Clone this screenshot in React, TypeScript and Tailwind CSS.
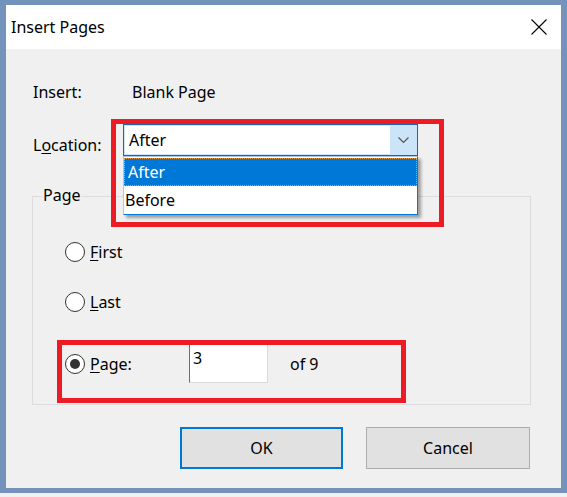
import React from 'react';

function Radio({ checked = false }: { checked?: boolean }) {
  return (
    <span className="flex h-[20px] w-[20px] shrink-0 items-center justify-center rounded-full border border-[#333333] bg-white">
      {checked && <span className="h-[10px] w-[10px] rounded-full bg-[#333333]" />}
    </span>
  );
}

export default function App() {
  return (
    <div className="relative h-[497px] w-[567px] overflow-hidden bg-[#f0f0f0] font-['Noto_Sans',sans-serif] text-[16px] leading-[22px] text-black">
      <div className="flex h-[493px] flex-col border-b-[5px] border-l-[6px] border-r-[6px] border-t-[5px] border-[#7393bd]">
        {/* Title bar */}
        <div className="flex h-[44px] shrink-0 items-center justify-between bg-white pl-[5px] pr-[14px]">
          <span className="text-[16px]">Insert Pages</span>
          <svg width="16" height="16" viewBox="0 0 16 16" aria-hidden="true">
            <path d="M0.5 0.5L15.5 15.5M15.5 0.5L0.5 15.5" stroke="#000" strokeWidth="1.1" fill="none" />
          </svg>
        </div>

        {/* Body */}
        <div className="flex flex-1 flex-col bg-[#f0f0f0] pl-[26px] pr-[30px] pt-[32px]">
          <div className="flex pl-px">
            <span className="w-[99px]">Insert:</span>
            <span>Blank Page</span>
          </div>

          <div className="mt-[21px] flex items-end pl-px">
            <span className="w-[90px]">
              L<u className="underline-offset-2">o</u>cation:
            </span>
            <div className="relative flex h-[32px] w-[295px] border border-[#1e63b4] bg-[#cce4f7]">
              <div className="my-px ml-px flex flex-1 items-center bg-white pl-[4px]">After</div>
              <div className="flex w-[27px] items-center justify-center">
                <svg width="11" height="7" viewBox="0 0 11 7" aria-hidden="true">
                  <path d="M0.5 0.5L5.5 5.5L10.5 0.5" stroke="#555" strokeWidth="1.2" fill="none" />
                </svg>
              </div>

              {/* Open list */}
              <div className="absolute left-[-1px] top-[31px] z-10 w-[295px] border border-[#0078d7] border-l-[#a9c7e8] border-t-[#a9c7e8] bg-white py-px shadow-[3px_3px_3px_rgba(0,0,0,0.35)]">
                <div className="flex h-[28px] items-center border border-dotted border-[#f0a040] bg-[#0078d7] pl-[3px] text-white">
                  After
                </div>
                <div className="flex h-[27px] items-center pl-[1px]">Before</div>
              </div>
            </div>
          </div>

          {/* Page group */}
          <div className="relative mt-[40px] h-[209px] border border-[#dcdcdc]">
            <span className="absolute left-[9px] top-[-13px] bg-[#f0f0f0] px-px">Page</span>
            <div className="flex flex-col pl-[32px] pt-[44px]">
              <div className="flex h-[22px] items-center gap-[5px]">
                <Radio />
                <span>
                  <u className="underline-offset-2">F</u>irst
                </span>
              </div>
              <div className="mt-[28px] flex h-[22px] items-center gap-[5px]">
                <Radio />
                <span>
                  <u className="underline-offset-2">L</u>ast
                </span>
              </div>
              <div className="mt-[31px] flex h-[39px] items-center">
                <Radio checked />
                <span className="ml-[5px] w-[99px]">
                  <u className="underline-offset-2">P</u>age:
                </span>
                <div className="h-[39px] w-[79px] self-start border border-[#dadada] border-l-[#6e6e6e] border-t-[#e6e6e6] bg-white pl-[3px] pt-[2px]">
                  3
                </div>
                <span className="ml-[22px]">of 9</span>
              </div>
            </div>
          </div>

          {/* Buttons */}
          <div className="mt-[22px] flex justify-end gap-[23px] pr-px">
            <button className="h-[42px] w-[163px] border-2 border-[#0078d7] bg-[#e1e1e1]">OK</button>
            <button className="h-[42px] w-[164px] border border-[#adadad] bg-[#e1e1e1]">Cancel</button>
          </div>
        </div>
      </div>

      {/* Annotation boxes */}
      <div className="pointer-events-none absolute left-[111px] top-[119px] h-[108px] w-[333px] border-[5px] border-[#ed1c24]" />
      <div className="pointer-events-none absolute left-[57px] top-[340px] h-[63px] w-[349px] border-[5px] border-[#ed1c24]" />
    </div>
  );
}
